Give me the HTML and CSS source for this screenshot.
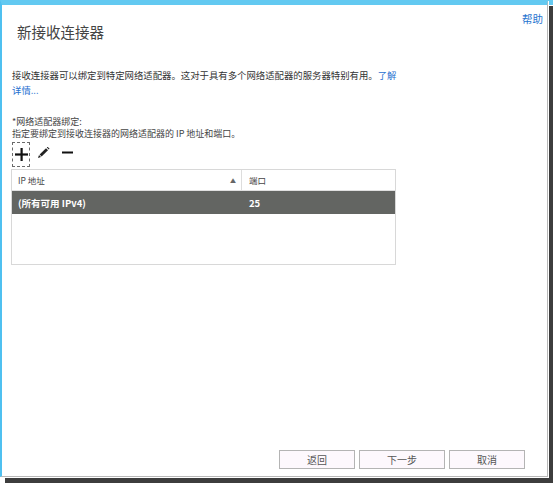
FILE: index.html
```html
<!DOCTYPE html>
<html lang="zh-CN">
<head>
<meta charset="utf-8">
<title>新接收连接器</title>
<link rel="stylesheet" href="styles.css">
</head>
<body>
<div class="window">
  <div class="header">
    <div class="title">新接收连接器</div>
    <a class="help" href="#">帮助</a>
  </div>
  <p class="desc">接收连接器可以绑定到特定网络适配器。这对于具有多个网络适配器的服务器特别有用。<a class="link" href="#">了解详情...</a></p>
  <div class="label">
    <div>*网络适配器绑定:</div>
    <div>指定要绑定到接收连接器的网络适配器的 IP 地址和端口。</div>
  </div>
  <div class="toolbar">
    <span class="tool tool-add">
      <svg width="13" height="13" viewBox="0 0 13 13"><rect x="5.5" y="0" width="2.2" height="13" fill="#111"/><rect x="0" y="5.4" width="13" height="2.2" fill="#111"/></svg>
    </span>
    <span class="tool tool-edit">
      <svg width="12" height="11" viewBox="0 0 12 11"><polygon points="0,11 1,8 3,10" fill="#222"/><polygon points="1.6,7.4 8,1.2 10,3.2 3.6,9.4" fill="#222"/><polygon points="8.8,0.4 9.6,-0.2 11.6,1.8 10.8,2.6" fill="#222"/></svg>
    </span>
    <span class="tool tool-remove">
      <svg width="11" height="3" viewBox="0 0 11 3"><rect x="0" y="0.5" width="11" height="2" fill="#111"/></svg>
    </span>
  </div>
  <div class="table">
    <div class="row head">
      <div class="cell c1">IP 地址<span class="sort">▲</span></div>
      <div class="cell c2">端口</div>
    </div>
    <div class="row selected">
      <div class="cell c1">(所有可用 IPv4)</div>
      <div class="cell c2">25</div>
    </div>
  </div>
  <div class="buttons">
    <button class="btn btn-back">返回</button>
    <button class="btn btn-next">下一步</button>
    <button class="btn btn-cancel">取消</button>
  </div>
</div>
</body>
</html>
```

FILE: styles.css
```css
html, body {
  margin: 0;
  padding: 0;
  background: #ffffff;
}
body {
  width: 553px;
  height: 484px;
  overflow: hidden;
  font-family: "Noto Sans CJK SC", "Microsoft YaHei", sans-serif;
  background: linear-gradient(#63c9f1, #63c9f1) top left / 553px 5px no-repeat, #ffffff;
}
.window {
  box-sizing: border-box;
  width: 548px;
  height: 477px;
  border-top: 5px solid #63c9f1;
  border-left: 2px solid #4fc0f0;
  border-right: 1px solid #b8b8b8;
  border-bottom: 1px solid #b8b8b8;
  background: #ffffff;
  box-shadow: 1px 1px 0 0 #ffffff, 5px 6px 0 0 #3d3d3d;
  padding: 0 4px 0 10px;
  display: flex;
  flex-direction: column;
}
.header {
  display: flex;
  justify-content: space-between;
  align-items: flex-start;
}
.title {
  margin: 17px 0 0 5px;
  font-size: 14.5px;
  line-height: 20px;
  color: #444444;
}
.help {
  margin-top: 7px;
  font-size: 10.5px;
  line-height: 14px;
  color: #1f74cf;
  text-decoration: none;
}
.desc {
  margin: 26px 0 0 0;
  width: 390px;
  font-size: 9.4px;
  line-height: 15px;
  color: #333333;
}
.link {
  color: #1f6fd0;
  text-decoration: none;
}
.label {
  margin-top: 18px;
  font-size: 9px;
  line-height: 11.5px;
  color: #444444;
}
.toolbar {
  margin-top: 3px;
  display: flex;
  align-items: center;
  height: 25px;
}
.tool {
  display: flex;
  align-items: center;
  justify-content: center;
}
.tool-add {
  box-sizing: border-box;
  width: 18px;
  height: 25px;
  outline: 1px dashed #6a6a6a;
  outline-offset: -1px;
}
.tool-edit {
  margin-left: 8px;
  margin-top: -4px;
}
.tool-remove {
  margin-left: 12px;
  margin-top: -4px;
}
.table {
  margin: 2px 0 0 -1px;
  box-sizing: border-box;
  width: 385px;
  height: 96px;
  border: 1px solid #d8d8d8;
}
.row {
  display: flex;
}
.head {
  height: 20px;
  border-bottom: 1px solid #e0e0e0;
  font-size: 8.5px;
  color: #444444;
}
.head .c1 {
  border-right: 1px solid #dddddd;
}
.cell {
  display: flex;
  align-items: center;
  box-sizing: border-box;
}
.c1 {
  width: 230px;
  padding-left: 6px;
  position: relative;
}
.c2 {
  padding-left: 7px;
}
.sort {
  position: absolute;
  right: 5px;
  top: 6px;
  font-size: 6px;
  color: #666666;
}
.selected {
  height: 23px;
  background: #636562;
  color: #ffffff;
  font-weight: bold;
  font-size: 9.5px;
}
.buttons {
  margin-top: auto;
  margin-bottom: 7px;
  display: flex;
  justify-content: flex-end;
  gap: 4px;
  padding-right: 18px;
}
.btn {
  box-sizing: border-box;
  height: 19px;
  border: 1px solid #b4b4b4;
  background: #fdf8fd;
  color: #555555;
  font-family: "Noto Sans CJK SC", "Microsoft YaHei", sans-serif;
  font-size: 10px;
  padding: 0;
}
.btn-back { width: 76px; }
.btn-next { width: 86px; }
.btn-cancel { width: 76px; }
```
